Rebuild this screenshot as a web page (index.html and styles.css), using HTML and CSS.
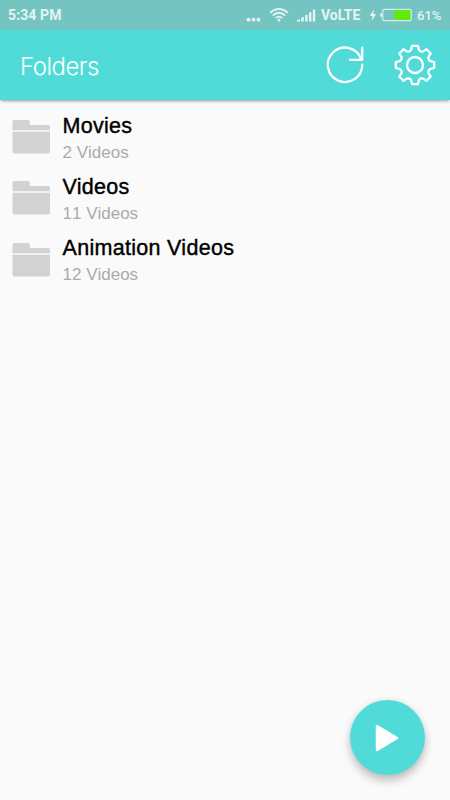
FILE: index.html
```html
<!DOCTYPE html>
<html lang="en">
<head>
    <meta charset="UTF-8">
    <meta name="viewport" content="width=device-width, initial-scale=1.0">
    <title>Folders</title>
    <link rel="stylesheet" href="styles.css">
</head>

<body>
    <div class="status">
        <span class="time">5:34 PM</span>
        <svg class="dots" width="15" height="30" viewBox="0 0 15 30">
            <circle cx="2.5" cy="19.7" r="1.9"/>
            <circle cx="7.5" cy="19.7" r="1.9"/>
            <circle cx="12.5" cy="19.7" r="1.9"/>
        </svg>
        <svg class="wifi" width="20" height="30" viewBox="0 0 20 30">
            <path d="M1 12.8Q10 5 19 12.8M3.8 15.5Q10 10 16.2 15.5M6.5 18.2Q10 15 13.5 18.2"/>
            <circle cx="10" cy="20" r="1.5"/>
        </svg>
        <svg class="signal" width="19" height="30" viewBox="0 0 19 30">
            <path d="M0 21.5V20L3 19V21.5ZM4.2 21.5V17.8L6.8 16.8V21.5ZM8.2 21.5V15H10.6V21.5ZM12 21.5V12.2H14.4V21.5ZM15.8 21.5V9.5H18.2V21.5Z"/>
        </svg>
        <span class="network">VoLTE</span>
        <svg class="bolt" width="8" height="30" viewBox="0 0 8 30">
            <path d="M5 9.5L0.8 16H3.6L2.5 21L7.2 14H4.2Z"/>
        </svg>
        <svg class="battery" width="32" height="30" viewBox="0 0 32 30">
            <rect class="level" x="14" y="10" width="17" height="10.3"/>
            <rect class="case" x="2.8" y="9.3" width="28.4" height="11.4" rx="1.3"/>
            <rect class="tip" x="0.3" y="13.2" width="1.7" height="3.6"/>
        </svg>
        <span class="percent">61%</span>
    </div>

    <header class="toolbar">
        <h1>Folders</h1>
        <button class="icon-button" aria-label="Refresh">
            <svg width="42" height="42" viewBox="-21 -21 42 42">
                <path d="M17.2 -0.3A17.2 17.2 0 1 1 16.2 -6M17.2 -17.3V-5.2H5"/>
            </svg>
        </button>
        <button class="icon-button" aria-label="Settings">
            <svg width="42" height="42" viewBox="-21 -21 42 42">
                <path d="M-3 -19.2H3L3.8 -15.5C4.3 -13.9 6.9 -12.8 8.3 -13.65L11.5 -15.7L15.7 -11.5L13.65 -8.3C12.8 -6.9 13.9 -4.3 15.5 -3.8L19.2 -3V3L15.5 3.8C13.9 4.3 12.8 6.9 13.65 8.3L15.7 11.5L11.5 15.7L8.3 13.65C6.9 12.8 4.3 13.9 3.8 15.5L3 19.2H-3L-3.8 15.5C-4.3 13.9 -6.9 12.8 -8.3 13.65L-11.5 15.7L-15.7 11.5L-13.65 8.3C-12.8 6.9 -13.9 4.3 -15.5 3.8L-19.2 3V-3L-15.5 -3.8C-13.9 -4.3 -12.8 -6.9 -13.65 -8.3L-15.7 -11.5L-11.5 -15.7L-8.3 -13.65C-6.9 -12.8 -4.3 -13.9 -3.8 -15.5Z"/>
                <circle r="8"/>
            </svg>
        </button>
    </header>

    <ul class="folders">
        <li class="folder">
            <svg class="folder-icon" width="38" height="34" viewBox="0 0 38 34">
                <path d="M0.5 10.3V1.8Q0.5 0 2.3 0H16Q17.8 0 17.8 1.8V5H36.2Q38 5 38 6.8V10.3ZM0.5 11.8H38V31.8Q38 33.5 36.2 33.5H2.3Q0.5 33.5 0.5 31.8Z"/>
            </svg>
            <div class="info">
                <span class="name">Movies</span>
                <span class="count">2 Videos</span>
            </div>
        </li>
        <li class="folder">
            <svg class="folder-icon" width="38" height="34" viewBox="0 0 38 34">
                <path d="M0.5 10.3V1.8Q0.5 0 2.3 0H16Q17.8 0 17.8 1.8V5H36.2Q38 5 38 6.8V10.3ZM0.5 11.8H38V31.8Q38 33.5 36.2 33.5H2.3Q0.5 33.5 0.5 31.8Z"/>
            </svg>
            <div class="info">
                <span class="name">Videos</span>
                <span class="count">11 Videos</span>
            </div>
        </li>
        <li class="folder">
            <svg class="folder-icon" width="38" height="34" viewBox="0 0 38 34">
                <path d="M0.5 10.3V1.8Q0.5 0 2.3 0H16Q17.8 0 17.8 1.8V5H36.2Q38 5 38 6.8V10.3ZM0.5 11.8H38V31.8Q38 33.5 36.2 33.5H2.3Q0.5 33.5 0.5 31.8Z"/>
            </svg>
            <div class="info">
                <span class="name">Animation Videos</span>
                <span class="count">12 Videos</span>
            </div>
        </li>
    </ul>

    <button class="play" aria-label="Play">
        <svg width="24" height="28" viewBox="0 0 24 28">
            <path d="M2 2L22 14L2 26Z"/>
        </svg>
    </button>
</body>
</html>
```
FILE: styles.css
```css
* {
    box-sizing: border-box;
    margin: 0;
    padding: 0;
}

body {
    height: 100vh;
    display: flex;
    flex-direction: column;
    background-color: #fafafa;
    font-family: "Liberation Sans", Arial, sans-serif;
    overflow: hidden;
}

svg {
    display: block;
    flex: none;
}

button {
    border: none;
    background: none;
}

/* status bar */
.status {
    height: 30px;
    flex: none;
    display: flex;
    align-items: center;
    padding: 0 7px 0 8px;
    background-color: #74c4c2;
    color: #e3f4f3;
    fill: #e3f4f3;
    font-family: Roboto, sans-serif;
    font-size: 14px;
    font-weight: 500;
    line-height: 31px;
    white-space: nowrap;
}

.time {
    margin-right: auto;
    font-weight: 700;
    letter-spacing: 0.1px;
}

.wifi {
    margin-left: 8px;
}

.wifi path {
    fill: none;
    stroke: #e3f4f3;
    stroke-width: 1.7;
}

.signal {
    margin-left: 8px;
}

.network {
    width: 41px;
    margin-left: 5px;
    font-weight: 700;
}

.bolt {
    margin-left: 7px;
}

.battery {
    margin-left: 3px;
}

.battery .level {
    fill: #63e811;
}

.battery .case {
    fill: none;
    stroke: #d5eeed;
    stroke-width: 1.2;
}

.percent {
    width: 26px;
    margin-left: 5px;
    font-size: 13px;
}

/* toolbar */
.toolbar {
    height: 70px;
    flex: none;
    display: flex;
    align-items: center;
    gap: 28px;
    padding: 0 14px 0 20px;
    background-color: #50dbd9;
    color: #fff;
    box-shadow: 0 2px 3px -1px rgba(0, 0, 0, 0.4);
}

h1 {
    margin-right: auto;
    padding-top: 3px;
    font-family: Inter, sans-serif;
    font-size: 24px;
    font-weight: 300;
    letter-spacing: -0.5px;
}

.icon-button svg {
    fill: none;
    stroke: #fff;
    stroke-width: 2.3;
    stroke-linecap: round;
    stroke-linejoin: round;
}

/* folder list */
.folders {
    flex: 1;
    padding-top: 10px;
    list-style: none;
}

.folder {
    height: 61.2px;
    display: flex;
    gap: 12.5px;
    padding-left: 12px;
}

.folder-icon {
    margin-top: 10.3px;
    fill: #d2d2d2;
}

.info {
    display: flex;
    flex-direction: column;
}

.name {
    color: #000;
    font-size: 21.5px;
    line-height: 32px;
    letter-spacing: 0.3px;
    -webkit-text-stroke: 0.4px #000;
}

.count {
    color: #aaa;
    font-size: 17px;
    font-kerning: none;
    line-height: 22px;
}

/* floating button over the list */
.play {
    position: absolute;
    right: 25px;
    bottom: 25px;
    width: 75px;
    height: 75px;
    display: flex;
    align-items: center;
    justify-content: center;
    border-radius: 50%;
    background-color: #50dbd9;
    box-shadow: 0 6px 10px rgba(0, 0, 0, 0.22), 0 0 6px rgba(0, 0, 0, 0.08);
}

.play svg {
    margin-right: 1px;
    fill: #fff;
    stroke: #fff;
    stroke-width: 2.5;
    stroke-linejoin: round;
}
```
